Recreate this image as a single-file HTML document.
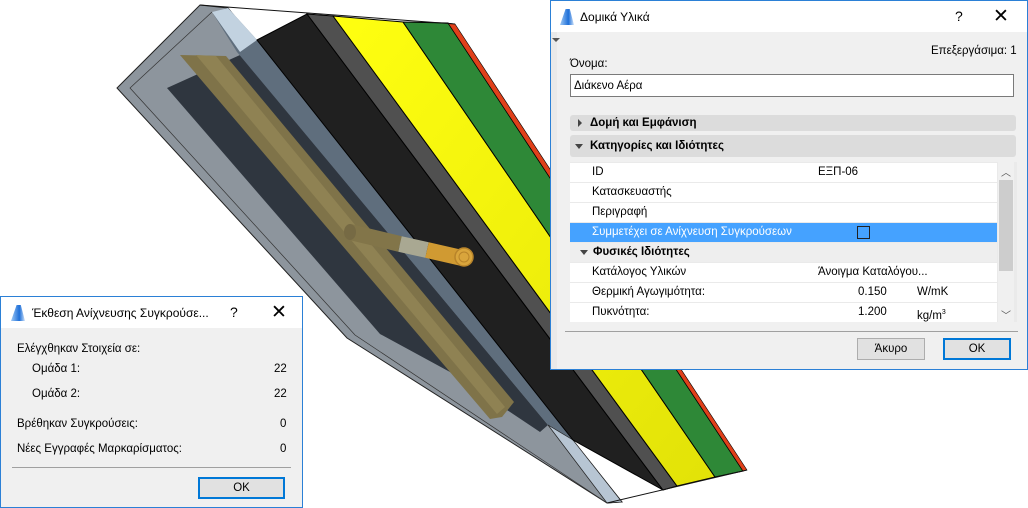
<!DOCTYPE html>
<html><head><meta charset="utf-8"><style>
*{margin:0;padding:0;box-sizing:border-box}
body{width:1028px;height:508px;background:#fff;position:relative;overflow:hidden;font-family:"Liberation Sans","DejaVu Sans",sans-serif;font-size:11.5px;color:#000}
.abs{position:absolute}
.dlg{position:absolute;background:#f0f0f0;border:1px solid #2b80d6}
.tb{position:absolute;left:0;right:0;top:0;height:31px;background:#fff}
.ico{position:absolute;width:14px;height:16px;background:linear-gradient(90deg,#9ec8f5,#1e6fd8 60%,#cfe3fa);clip-path:polygon(0 100%,40% 0,70% 0,100% 100%)}
.btn{position:absolute;height:22px;background:#e1e1e1;border:1px solid #adadad;text-align:center;line-height:20px}
.btn.def{border:2px solid #0078d7;line-height:18px}
.row{position:absolute;left:0;width:427px;height:19px;background:#fff;line-height:19px}
.row span{position:absolute}
</style></head><body>
<svg class="abs" style="left:0;top:0" width="1028" height="508" viewBox="0 0 1028 508">
<defs>
<linearGradient id="y" x1="0" y1="0" x2="1" y2="1"><stop offset="0" stop-color="#ffff10"/><stop offset="1" stop-color="#e2e208"/></linearGradient>
</defs>
<polygon points="200,5 228,8 622,502 607,503 347,338 117,88" fill="#8d959d" stroke="#222" stroke-width="1"/>
<polyline points="212,12 130,88 355,335 607,503" fill="none" stroke="#333" stroke-width="0.7"/>
<polygon points="167,88 240,55 548,425 540,432 450,372 380,334" fill="#2f363f"/>
<polygon points="212,12 228,8 257,40 573,440 548,425 237,52" fill="#5f6e7d"/>
<polygon points="212,12 228,8 257,40 240,52" fill="#c2d2e0"/>
<polygon points="548,425 573,440 622,502 607,503" fill="#b7c5d3" stroke="#222" stroke-width="0.7"/>
<polygon points="257,40 307,14 663,490 573,440" fill="#202020" stroke="#000" stroke-width="1"/>
<polygon points="307,14 333,16 677,486 663,490" fill="#505050" stroke="#000" stroke-width="1"/>
<polygon points="333,16 403,22 715,477 677,486" fill="url(#y)" stroke="#000" stroke-width="1"/>
<polygon points="403,22 448,23 743,471 715,477" fill="#2e8837" stroke="#000" stroke-width="1"/>
<polygon points="448,23 455,24 747,470 743,471" fill="#e0401a" stroke="#000" stroke-width="0.6"/>
<line x1="200" y1="5" x2="455" y2="24" stroke="#111" stroke-width="1"/>
<line x1="607" y1="503" x2="747" y2="470" stroke="#111" stroke-width="1"/>
<polygon points="180,55 226,56 514,402 502,417 490,419" fill="#7f7349"/>
<polygon points="196,55 216,56 505,407 497,414" fill="#8f8253"/>
<line x1="350" y1="232" x2="400" y2="244" stroke="#827549" stroke-width="16"/>
<line x1="400" y1="244" x2="427" y2="250" stroke="#a9a892" stroke-width="16"/>
<line x1="427" y1="250" x2="462" y2="258" stroke="#d09a32" stroke-width="16"/>
<ellipse cx="350" cy="232" rx="6" ry="8" fill="#766a44"/>
<circle cx="464" cy="257" r="9" fill="#d9a53c" stroke="#b8842a" stroke-width="1.5"/>
<circle cx="464" cy="257" r="5" fill="none" stroke="#b8842a" stroke-width="1"/>
</svg>

<!-- Right dialog -->
<div class="dlg" style="left:550px;top:0;width:478px;height:370px">
 <div class="tb"><div class="ico" style="left:9px;top:8px"></div>
  <span class="abs" style="left:29px;top:9px;font-size:12px">Δομικά Υλικά</span>
  <span class="abs" style="left:404px;top:7px;font-size:14px">?</span>
  <span class="abs" style="left:442px;top:4px;font-size:19px">✕</span></div>
 <div class="abs" style="left:0;top:31px;width:6px;bottom:0;background:#e9e9e9"></div>
 <div class="abs" style="left:1px;top:37px;border-left:4px solid transparent;border-right:4px solid transparent;border-top:4px solid #555"></div>
 <span class="abs" style="left:380px;top:44px">Επεξεργάσιμα: 1</span>
 <span class="abs" style="left:19px;top:57px">Όνομα:</span>
 <div class="abs" style="left:19px;top:73px;width:444px;height:23px;background:#fff;border:1px solid #7a7a7a;padding:5px 3px">Διάκενο Αέρα</div>
 <div class="abs" style="left:19px;top:114px;width:446px;height:16px;background:#dcdcdc;border-radius:3px;font-weight:bold;line-height:16px;padding-left:20px">Δομή και Εμφάνιση</div>
 <div class="abs" style="left:27px;top:118px;border-top:4px solid transparent;border-bottom:4px solid transparent;border-left:4px solid #444"></div>
 <div class="abs" style="left:19px;top:134px;width:446px;height:22px;background:#dcdcdc;border-radius:3px;font-weight:bold;line-height:22px;padding-left:20px">Κατηγορίες και Ιδιότητες</div>
 <div class="abs" style="left:24px;top:143px;border-left:4px solid transparent;border-right:4px solid transparent;border-top:5px solid #444"></div>
 <div class="abs" style="left:19px;top:161px;width:447px;height:160px;background:#eaeaea">
  <div class="row" style="top:1px"><span style="left:22px">ID</span><span style="left:248px">ΕΞΠ-06</span></div>
  <div class="row" style="top:21px"><span style="left:22px">Κατασκευαστής</span></div>
  <div class="row" style="top:41px"><span style="left:22px">Περιγραφή</span></div>
  <div class="row" style="top:61px;background:#45a2ff;color:#fff"><span style="left:22px">Συμμετέχει σε Ανίχνευση Συγκρούσεων</span><span style="left:287px;top:3px;width:13px;height:13px;border:1px solid #222"></span></div>
  <div class="row" style="top:81px;background:#eeeeee;font-weight:bold"><span style="left:10px;top:7px;border-left:4px solid transparent;border-right:4px solid transparent;border-top:5px solid #444;width:0;height:0"></span><span style="left:23px">Φυσικές Ιδιότητες</span></div>
  <div class="row" style="top:101px"><span style="left:22px">Κατάλογος Υλικών</span><span style="left:248px">Άνοιγμα Καταλόγου...</span></div>
  <div class="row" style="top:121px"><span style="left:22px">Θερμική Αγωγιμότητα:</span><span style="left:288px">0.150</span><span style="left:347px">W/mK</span></div>
  <div class="row" style="top:141px"><span style="left:22px">Πυκνότητα:</span><span style="left:288px">1.200</span><span style="left:347px">kg/m<sup style="font-size:7px">3</sup></span></div>
  <div class="abs" style="left:428px;top:0;width:16px;height:160px;background:#f0f0f0"><div class="abs" style="left:1px;top:18px;width:14px;height:91px;background:#cdcdcd"></div>
   <span class="abs" style="left:3px;top:2px;font-size:10px;color:#555">︿</span><span class="abs" style="left:3px;top:145px;font-size:10px;color:#555">﹀</span></div>
 </div>
 <div class="abs" style="left:14px;top:330px;width:453px;height:1px;background:#a0a0a0"></div>
 <div class="btn" style="left:306px;top:337px;width:68px">Άκυρο</div>
 <div class="btn def" style="left:392px;top:337px;width:68px">OK</div>
</div>

<!-- Left dialog -->
<div class="dlg" style="left:0;top:296px;width:303px;height:212px">
 <div class="tb"><div class="ico" style="left:10px;top:8px"></div>
  <span class="abs" style="left:31px;top:9px;font-size:12px">Έκθεση Ανίχνευσης Συγκρούσε...</span>
  <span class="abs" style="left:229px;top:7px;font-size:14px">?</span>
  <span class="abs" style="left:270px;top:4px;font-size:19px">✕</span></div>
 <span class="abs" style="left:16px;top:46px">Ελέγχθηκαν Στοιχεία σε:</span>
 <span class="abs" style="left:31px;top:66px">Ομάδα 1:</span><span class="abs" style="left:273px;top:66px">22</span>
 <span class="abs" style="left:31px;top:91px">Ομάδα 2:</span><span class="abs" style="left:273px;top:91px">22</span>
 <span class="abs" style="left:16px;top:121px">Βρέθηκαν Συγκρούσεις:</span><span class="abs" style="left:279px;top:121px">0</span>
 <span class="abs" style="left:16px;top:146px">Νέες Εγγραφές Μαρκαρίσματος:</span><span class="abs" style="left:279px;top:146px">0</span>
 <div class="abs" style="left:11px;top:170px;width:279px;height:1px;background:#a0a0a0"></div>
 <div class="btn def" style="left:197px;top:180px;width:87px">OK</div>
</div>
</body></html>
